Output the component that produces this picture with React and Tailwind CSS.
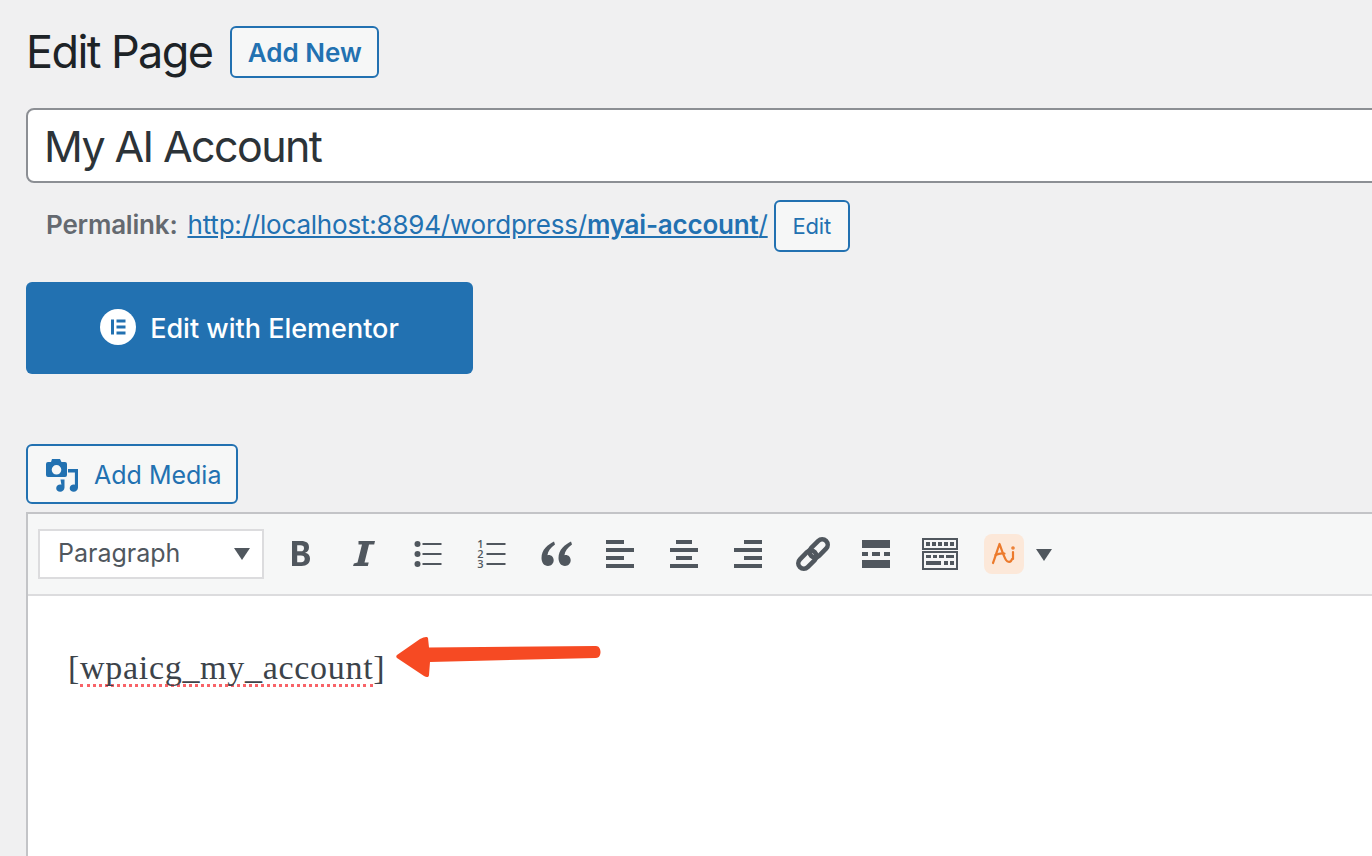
const ICON = "#50575e";

function ToolButton({ children }) {
  return <div className="flex h-10 w-16 shrink-0 items-center justify-center">{children}</div>;
}

function Icon({ children }) {
  return (
    <svg width="40" height="40" viewBox="0 0 40 40" fill={ICON}>
      {children}
    </svg>
  );
}

function BoldIcon() {
  return (
    <Icon>
      <path fillRule="evenodd" transform="translate(1 0)" d="M11 7h9c5.500 0 8 2.200 8 6.200 0 2.800-1.400 4.700-3.700 5.400v.2c3 .6 4.700 2.600 4.700 5.800 0 4.700-3.100 7.400-8.500 7.400H11V7zm5.200 4.300v6h3.500c2.300 0 3.300-1 3.300-3.100 0-2-1.200-2.900-3.500-2.900h-3.300zm0 10.100v6.900h3.900c2.400 0 3.600-1.200 3.600-3.500 0-2.300-1.200-3.400-3.800-3.400h-3.700z" />
    </Icon>
  );
}

function ItalicIcon() {
  return (
    <Icon>
      <path d="M14.500 7H31l-.8 3.500h-5.200l-4.500 18h4.200l-.9 3.500H9l.9-2.500 3.600-1 4.500-18h-3.500z" />
    </Icon>
  );
}

function BulletIcon() {
  return (
    <Icon>
      <circle cx="9.500" cy="10" r="3" />
      <circle cx="9.500" cy="20" r="3" />
      <circle cx="9.500" cy="30" r="3" />
      <rect x="14.500" y="9" width="19" height="2" />
      <rect x="14.500" y="19" width="19" height="2" />
      <rect x="14.500" y="29" width="19" height="2" />
    </Icon>
  );
}

function NumberIcon() {
  return (
    <Icon>
      <text x="8.500" y="14" fontSize="11" fontWeight="600" textAnchor="middle" fontFamily="'Open Sans', sans-serif">1</text>
      <text x="8.500" y="24" fontSize="11" fontWeight="600" textAnchor="middle" fontFamily="'Open Sans', sans-serif">2</text>
      <text x="8.500" y="34" fontSize="11" fontWeight="600" textAnchor="middle" fontFamily="'Open Sans', sans-serif">3</text>
      <rect x="14.500" y="9" width="19" height="2" />
      <rect x="14.500" y="19" width="19" height="2" />
      <rect x="14.500" y="29" width="19" height="2" />
    </Icon>
  );
}

function QuoteIcon() {
  return (
    <Icon>
      <path d="M18 7.500c-6 3-12.500 8-12.500 16.500 0 4.400 2.500 8 6.500 8 3.400 0 5.700-2.700 5.700-5.700 0-3.100-2.200-5.300-5-5.300-.5 0-1 .1-1.300.2C12 17 14.500 14 19 10.500z" />
      <path d="M35 7.500c-6 3-12.500 8-12.500 16.500 0 4.400 2.500 8 6.500 8 3.400 0 5.700-2.700 5.700-5.700 0-3.100-2.200-5.300-5-5.300-.5 0-1 .1-1.300.2C29 17 31.500 14 36 10.500z" />
    </Icon>
  );
}

function AlignIcon({ kind }) {
  const short = kind === "left" ? 6 : kind === "center" ? 12 : 16;
  const width = kind === "left" ? 18 : kind === "center" ? 16 : 18;
  return (
    <Icon>
      <rect x={short} y="6" width={width} height="4" />
      <rect x="6" y="14" width="28" height="4" />
      <rect x={short} y="22" width={width} height="4" />
      <rect x="6" y="30" width="28" height="4" />
    </Icon>
  );
}

function LinkIcon() {
  return (
    <svg width="40" height="40" viewBox="0 0 40 40" fill="none" stroke={ICON} strokeWidth="4.600">
      <g transform="translate(1 0) rotate(-45 20 20)">
        <rect x="1.500" y="14.500" width="21" height="11" rx="5.500" />
        <rect x="17.500" y="14.500" width="21" height="11" rx="5.500" />
      </g>
    </svg>
  );
}

function MoreIcon() {
  return (
    <Icon>
      <rect x="6" y="6" width="28" height="8" />
      <rect x="6" y="18" width="6" height="4" />
      <rect x="16" y="18" width="8" height="4" />
      <rect x="28" y="18" width="6" height="4" />
      <rect x="6" y="26" width="28" height="8" />
    </Icon>
  );
}

function KitchenIcon() {
  const top = [6, 12, 18, 24, 30];
  return (
    <svg width="40" height="40" viewBox="0 0 40 40">
      <rect x="3" y="5" width="34" height="10" fill="none" stroke={ICON} strokeWidth="2" />
      <rect x="3" y="18" width="34" height="17" fill="none" stroke={ICON} strokeWidth="2" />
      <g fill={ICON}>
        {top.map((x) => (
          <rect key={x} x={x} y="8" width="4" height="4" />
        ))}
        <rect x="6" y="21" width="5" height="3" />
        <rect x="13" y="21" width="4" height="3" />
        <rect x="19" y="21" width="5" height="3" />
        <rect x="26" y="21" width="8" height="3" />
        <rect x="6" y="27" width="15" height="4" />
        <rect x="24" y="27" width="4" height="4" />
        <rect x="30" y="27" width="4" height="4" />
      </g>
    </svg>
  );
}

function AiIcon() {
  return (
    <div className="flex h-10 w-10 items-center justify-center rounded-lg bg-[#fce8d9]">
      <svg width="30" height="30" viewBox="0 0 30 30" fill="none" stroke="#ec7a2c" strokeWidth="2.200" strokeLinecap="round" strokeLinejoin="round">
        <path d="M4 24c2-5 4-12 6.500-19 2 5 4 12 6.500 16 1.500 2.500 5 3 6-1" />
        <path d="M6.500 16c3-1.500 6-2 9-1.500" />
        <path d="M24 13v7" />
        <circle cx="24" cy="9" r=".7" fill="#ec7a2c" />
      </svg>
    </div>
  );
}

function ElementorLogo() {
  return (
    <svg width="36" height="36" viewBox="0 0 36 36" className="shrink-0">
      <circle cx="18" cy="18" r="18" fill="#fff" />
      <rect x="11" y="10.500" width="3" height="15" fill="#2271b1" />
      <rect x="16.500" y="10.500" width="9" height="3" fill="#2271b1" />
      <rect x="16.500" y="16.500" width="9" height="3" fill="#2271b1" />
      <rect x="16.500" y="22.500" width="9" height="3" fill="#2271b1" />
    </svg>
  );
}

function MediaIcon() {
  return (
    <svg width="32" height="34" viewBox="0 0 32 34" fill="#2271b1" className="mt-[2px] shrink-0">
      <path fillRule="evenodd" d="M6 1h8l1.500 3H19a2 2 0 0 1 2 2v11a2 2 0 0 1-2 2H2a2 2 0 0 1-2-2V6a2 2 0 0 1 2-2h3zm4.500 6a4.800 4.800 0 1 0 0 9.600 4.800 4.800 0 0 0 0-9.600z" />
      <path d="M22 11h10v18.500c0 2.500-2 4.300-4.300 4.300s-4-1.600-4-3.600 1.800-3.700 4-3.700c.4 0 .8 0 1.200.2V14.500H22z" />
      <path d="M14.500 21.500h4v8c0 2.500-2 4.300-4.300 4.300s-4-1.600-4-3.600 1.800-3.700 4-3.700c.4 0 .8 0 1.200.2z" />
    </svg>
  );
}

export default function App() {
  return (
    <div className="h-[856px] w-[1372px] overflow-hidden bg-[#f0f0f1] pl-[26px] font-['Inter',sans-serif]">
      <div className="flex h-[104px] items-start pt-[26px]">
        <h1 className="text-[45px] leading-[52px] font-normal tracking-[-1.6px] text-[#1d2327]">Edit Page</h1>
        <button className="ml-[18px] h-[52px] w-[149px] rounded-md border-2 border-[#2271b1] bg-[#f6f7f7] text-[26px] font-semibold text-[#2271b1]">
          Add New
        </button>
      </div>

      <div className="mt-[4px] mr-[-20px] flex h-[75px] items-center rounded-lg border-2 border-[#8c8f94] bg-white pt-[2px] pl-[16px] text-[43px] tracking-[-1.6px] text-[#2c3338]">
        My AI Account
      </div>

      <div className="mt-[17px] flex h-[52px] items-center pl-[20px] text-[26px] tracking-[-0.2px] whitespace-nowrap">
        <strong className="mb-[3px] font-semibold text-[#646970]">Permalink:</strong>
        <a className="mb-[3px] ml-[10px] text-[#2271b1] underline">
          http://localhost:8894/wordpress/<strong className="font-semibold">myai-account</strong>/
        </a>
        <button className="ml-[6px] h-[52px] w-[76px] rounded-md border-2 border-[#2271b1] bg-[#f6f7f7] text-[22px] text-[#2271b1]">
          Edit
        </button>
      </div>

      <button className="mt-[30px] flex h-[92px] w-[447px] items-center justify-center gap-[14px] rounded-md bg-[#2271b1] pb-[2px] text-[27px] font-medium text-white">
        <ElementorLogo />
        <span className="pt-[4px]">Edit with Elementor</span>
      </button>

      <button className="mt-[70px] flex h-[60px] w-[212px] items-center gap-[16px] rounded-md border-2 border-[#2271b1] bg-[#f6f7f7] pl-[18px] text-[25px] text-[#2271b1]">
        <MediaIcon />
        <span className="pt-[3px]">Add Media</span>
      </button>

      <div className="relative mt-[8px] mr-[-20px] h-[360px] border-t-2 border-l-2 border-[#c3c4c7] bg-white">
        <div className="flex h-[82px] items-center border-b-2 border-[#dcdcde] bg-[#f6f7f7] pl-[10px]">
          <div className="flex h-[50px] w-[226px] shrink-0 items-center justify-between border-2 border-[#dcdcde] bg-white pr-[12px] pl-[18px] text-[25px] text-[#50575e]">
            Paragraph
            <svg width="16" height="12" viewBox="0 0 16 12" fill={ICON}>
              <path d="M0 0h16l-8 12z" />
            </svg>
          </div>
          <div className="ml-[4px] flex items-center">
            <ToolButton><BoldIcon /></ToolButton>
            <ToolButton><ItalicIcon /></ToolButton>
            <ToolButton><BulletIcon /></ToolButton>
            <ToolButton><NumberIcon /></ToolButton>
            <ToolButton><QuoteIcon /></ToolButton>
            <ToolButton><AlignIcon kind="left" /></ToolButton>
            <ToolButton><AlignIcon kind="center" /></ToolButton>
            <ToolButton><AlignIcon kind="right" /></ToolButton>
            <ToolButton><LinkIcon /></ToolButton>
            <ToolButton><MoreIcon /></ToolButton>
            <ToolButton><KitchenIcon /></ToolButton>
            <ToolButton><AiIcon /></ToolButton>
            <svg width="16" height="12" viewBox="0 0 16 12" fill={ICON} className="mt-[2px]">
              <path d="M0 0h16l-8 12z" />
            </svg>
          </div>
        </div>
        <div className="pt-[48px] pl-[40px] font-['Liberation_Serif',serif] text-[34px] leading-[48px] tracking-[0.7px] whitespace-nowrap text-[#3c434a]">
          [<span className="inline-block border-b-[3px] border-dotted border-[#f86368] leading-[32px]">wpaicg_my_account</span>]
        </div>
        {/* annotation arrow */}
        <svg width="210" height="48" viewBox="0 0 210 48" fill="#f64a23" className="absolute top-[120px] left-[366px]">
          <path d="M3 21 26 5c4-2 7-3 8-1l1 9.500 167-1.500c6 0 6 12 0 12L36 28l-1 13c0 2-2 3-5 1L3 24c-1-1-1-2 0-3z" />
        </svg>
      </div>
    </div>
  );
}
